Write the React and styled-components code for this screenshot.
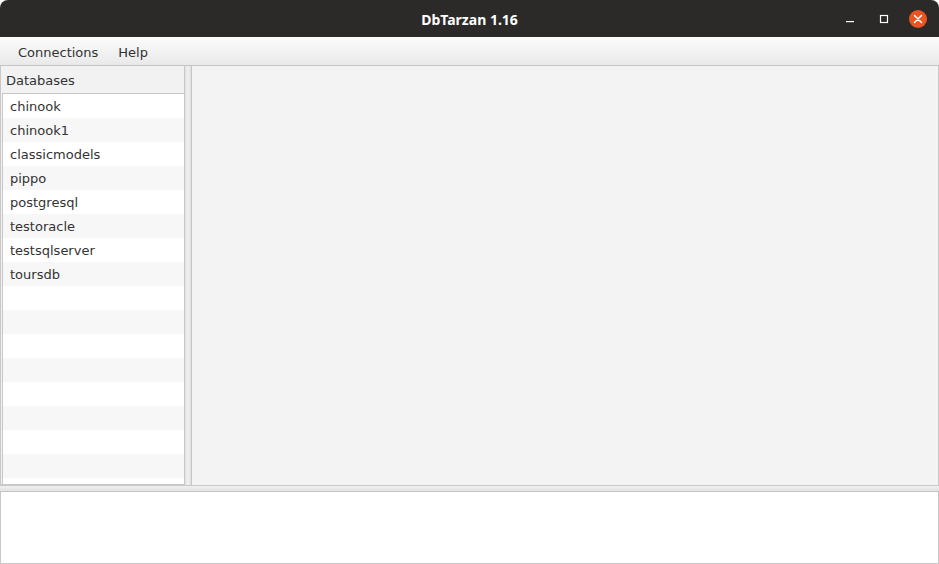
import React from 'react';
import styled, { createGlobalStyle } from 'styled-components';

const GlobalStyle = createGlobalStyle`
    html, body {
        margin: 0;
        padding: 0;
        background: #ffffff;
    }
    * {
        box-sizing: border-box;
    }
`;

const Window = styled.div`
    width: 939px;
    height: 564px;
    display: flex;
    flex-direction: column;
    font-family: "DejaVu Sans", "Noto Sans", sans-serif;
    overflow: hidden;
`;

const TitleBar = styled.div`
    height: 37px;
    flex: none;
    background: #2c2a29;
    border-radius: 8px 8px 0 0;
    position: relative;
    display: flex;
    align-items: center;
    justify-content: center;
`;

const Title = styled.div`
    color: #ffffff;
    font-family: "Noto Sans", "DejaVu Sans", sans-serif;
    font-weight: bold;
    font-size: 14px;
    padding-top: 1px;
`;

const Controls = styled.div`
    position: absolute;
    right: 12px;
    top: 0;
    height: 37px;
    display: flex;
    align-items: center;
    gap: 16px;
`;

const ControlButton = styled.div`
    width: 18px;
    height: 18px;
    display: flex;
    align-items: center;
    justify-content: center;
    border-radius: 50%;
    background: ${p => (p.$close ? '#e95420' : 'transparent')};
`;

const MenuBar = styled.div`
    height: 29px;
    flex: none;
    background: linear-gradient(#fcfcfc, #e9e9e9);
    border-bottom: 1px solid #c4c4c4;
    display: flex;
    align-items: center;
    padding-left: 8px;
`;

const MenuItem = styled.div`
    font-size: 13px;
    color: #333333;
    padding: 0 10px;
    padding-top: 2px;
`;

const Main = styled.div`
    flex: 1;
    display: flex;
    min-height: 0;
    background: #f2f2f2;
`;

const LeftPane = styled.div`
    width: 185px;
    flex: none;
    display: flex;
    flex-direction: column;
    border-left: 1px solid #c8c8c8;
    border-right: 1px solid #c8c8c8;
    border-bottom: 1px solid #c8c8c8;
    padding: 0 0 0 1px;
    background: #f2f2f2;
`;

const PaneHeader = styled.div`
    height: 27px;
    flex: none;
    font-size: 13px;
    color: #333333;
    display: flex;
    align-items: center;
    padding-left: 4px;
    padding-top: 1px;
`;

const List = styled.div`
    flex: 1;
    border: 1px solid #c8c8c8;
    border-right: none;
    border-bottom: none;
    overflow: hidden;
    background: #ffffff;
`;

const Row = styled.div`
    height: 24px;
    font-size: 13px;
    color: #333333;
    padding-left: 7px;
    display: flex;
    align-items: center;
    background: ${p => (p.$odd ? '#f7f7f7' : '#ffffff')};
`;

const VDivider = styled.div`
    width: 7px;
    flex: none;
    background: linear-gradient(90deg, #e0e0e0, #f2f2f2 50%, #dddddd);
    border-right: 1px solid #c8c8c8;
`;

const RightPane = styled.div`
    flex: 1;
    background: #f3f3f3;
    border-right: 1px solid #c8c8c8;
`;

const HDivider = styled.div`
    height: 7px;
    flex: none;
    background: linear-gradient(#f0f0f0, #e2e2e2);
    border-top: 1px solid #c8c8c8;
    border-bottom: 1px solid #c4c4c4;
`;

const Console = styled.div`
    height: 72px;
    flex: none;
    background: #ffffff;
    border-left: 1px solid #c8c8c8;
    border-right: 1px solid #c8c8c8;
    border-bottom: 1px solid #c8c8c8;
`;

const databases = [
    'chinook',
    'chinook1',
    'classicmodels',
    'pippo',
    'postgresql',
    'testoracle',
    'testsqlserver',
    'toursdb',
];

const App = () => {
    const rows = [...databases, ...Array(9).fill('')];

    return (
        <Window>
            <GlobalStyle />
            <TitleBar>
                <Title>DbTarzan 1.16</Title>
                <Controls>
                    <ControlButton>
                        <svg width="10" height="10" viewBox="0 0 10 10">
                            <rect x="1" y="7" width="8" height="1.2" fill="#ffffff" />
                        </svg>
                    </ControlButton>
                    <ControlButton>
                        <svg width="10" height="10" viewBox="0 0 10 10">
                            <rect x="1.5" y="1.5" width="7" height="7" fill="none" stroke="#ffffff" strokeWidth="1.2" />
                        </svg>
                    </ControlButton>
                    <ControlButton $close>
                        <svg width="10" height="10" viewBox="0 0 10 10">
                            <path d="M1.5 1.5 L8.5 8.5 M8.5 1.5 L1.5 8.5" stroke="#ffffff" strokeWidth="1.5" strokeLinecap="round" />
                        </svg>
                    </ControlButton>
                </Controls>
            </TitleBar>
            <MenuBar>
                <MenuItem>Connections</MenuItem>
                <MenuItem>Help</MenuItem>
            </MenuBar>
            <Main>
                <LeftPane>
                    <PaneHeader>Databases</PaneHeader>
                    <List>
                        {rows.map((name, i) => (
                            <Row key={i} $odd={i % 2 === 1}>{name}</Row>
                        ))}
                    </List>
                </LeftPane>
                <VDivider />
                <RightPane />
            </Main>
            <HDivider />
            <Console />
        </Window>
    );
};

export default App;
